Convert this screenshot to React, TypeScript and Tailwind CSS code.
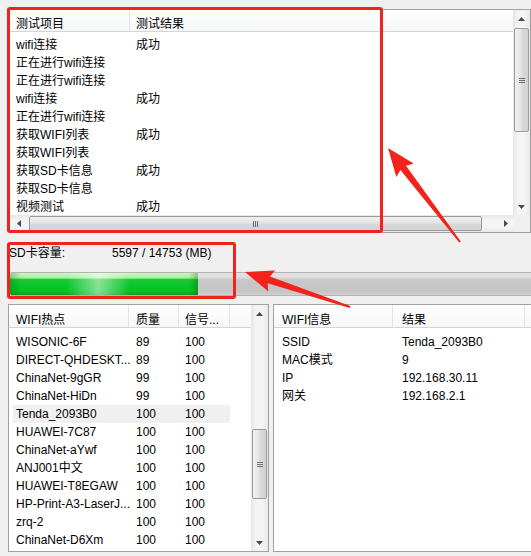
import React from 'react';

const topRows = [
  ['wifi连接', '成功'],
  ['正在进行wifi连接', ''],
  ['正在进行wifi连接', ''],
  ['wifi连接', '成功'],
  ['正在进行wifi连接', ''],
  ['获取WIFI列表', '成功'],
  ['获取WIFI列表', ''],
  ['获取SD卡信息', '成功'],
  ['获取SD卡信息', ''],
  ['视频测试', '成功'],
];

const wifiRows = [
  ['WISONIC-6F', '89', '100'],
  ['DIRECT-QHDESKT...', '89', '100'],
  ['ChinaNet-9gGR', '99', '100'],
  ['ChinaNet-HiDn', '99', '100'],
  ['Tenda_2093B0', '100', '100'],
  ['HUAWEI-7C87', '100', '100'],
  ['ChinaNet-aYwf', '100', '100'],
  ['ANJ001中文', '100', '100'],
  ['HUAWEI-T8EGAW', '100', '100'],
  ['HP-Print-A3-LaserJ...', '100', '100'],
  ['zrq-2', '100', '100'],
  ['ChinaNet-D6Xm', '100', '100'],
];

const infoRows = [
  ['SSID', 'Tenda_2093B0'],
  ['MAC模式', '9'],
  ['IP', '192.168.30.11'],
  ['网关', '192.168.2.1'],
];

function Tri({ dir }: { dir: 'up' | 'down' | 'left' | 'right' }) {
  const pts = {
    up: '0,4 3.5,0 7,4',
    down: '0,0 7,0 3.5,4',
    left: '4,0 4,7 0,3.5',
    right: '0,0 0,7 4,3.5',
  }[dir];
  const vertical = dir === 'up' || dir === 'down';
  return (
    <svg width={vertical ? 7 : 4} height={vertical ? 4 : 7} viewBox={vertical ? '0 0 7 4' : '0 0 4 7'}>
      <polygon points={pts} fill="#4a4a4a" />
    </svg>
  );
}

function VThumb({ h }: { h: string }) {
  return (
    <div className={`${h} mx-[1px] rounded-[2px] border border-[#9b9b9b] bg-[linear-gradient(90deg,#f2f2f2,#e4e4e4_45%,#d9d9d9_55%,#d2d2d2)] flex flex-col items-center justify-center gap-[1px]`}>
      <div className="w-[6px] h-[1px] bg-[#6e6e6e]" />
      <div className="w-[6px] h-[1px] bg-[#6e6e6e]" />
      <div className="w-[6px] h-[1px] bg-[#6e6e6e]" />
    </div>
  );
}

function VScroll({ gap, thumb }: { gap: string; thumb: string }) {
  return (
    <div className="w-[17px] h-full shrink-0 flex flex-col bg-[linear-gradient(90deg,#e6e6e6,#f4f4f4_30%,#f4f4f4_70%,#e9e9e9)]">
      <div className="h-[17px] flex items-center justify-center"><Tri dir="up" /></div>
      <div className={gap} />
      <VThumb h={thumb} />
      <div className="flex-1" />
      <div className="h-[17px] flex items-center justify-center"><Tri dir="down" /></div>
    </div>
  );
}

function HeaderCell({ w, pl, pt = 'pt-[6px]', line = true, children }: { w: string; pl: string; pt?: string; line?: boolean; children?: React.ReactNode }) {
  return (
    <div className={`${w} ${pl} ${pt} h-full flex items-center shrink-0 ${line ? 'border-r border-[#e2e4e7]' : ''}`}>{children}</div>
  );
}

function TopList() {
  return (
    <div className="w-[522px] h-[224px] border border-[#a0a0a0] bg-white flex flex-col">
      <div className="flex h-[205px]">
        <div className="flex-1">
          <div className="h-[22px] flex bg-[linear-gradient(180deg,#ffffff,#f6f7f8)] border-b border-[#d5d5d5]">
            <HeaderCell w="w-[120px]" pl="pl-[6px]">测试项目</HeaderCell>
            <HeaderCell w="w-[200px]" pl="pl-[6px]" line={false}>测试结果</HeaderCell>
          </div>
          <div className="pt-[4px]">
            {topRows.map((r, i) => (
              <div key={i} className="h-[18px] flex items-center">
                <div className="w-[120px] pl-[6px] whitespace-nowrap">{r[0]}</div>
                <div className="pl-[6px]">{r[1]}</div>
              </div>
            ))}
          </div>
        </div>
        <VScroll gap="h-[1px]" thumb="h-[104px]" />
      </div>
      <div className="flex h-[17px]">
        <div className="w-[504px] h-full flex items-center bg-[linear-gradient(180deg,#e6e6e6,#f4f4f4_30%,#f4f4f4_70%,#e9e9e9)]">
          <div className="w-[17px] h-full flex items-center justify-center"><Tri dir="left" /></div>
          <div className="w-[2px]" />
          <div className="w-[453px] h-[15px] rounded-[2px] border border-[#9b9b9b] bg-[linear-gradient(180deg,#f2f2f2,#e4e4e4_45%,#d9d9d9_55%,#d2d2d2)] flex items-center justify-center gap-[1px]">
            <div className="w-[1px] h-[6px] bg-[#6e6e6e]" />
            <div className="w-[1px] h-[6px] bg-[#6e6e6e]" />
            <div className="w-[1px] h-[6px] bg-[#6e6e6e]" />
          </div>
          <div className="flex-1" />
          <div className="w-[17px] h-full flex items-center justify-center"><Tri dir="right" /></div>
        </div>
        <div className="flex-1 bg-[#f0f0f0]" />
      </div>
    </div>
  );
}

function WifiList() {
  return (
    <div className="w-[261px] h-full shrink-0 border border-[#a0a0a0] bg-white flex">
      <div className="flex-1 overflow-hidden">
        <div className="h-[23px] flex bg-[linear-gradient(180deg,#ffffff,#f6f7f8)] border-b border-[#d5d5d5]">
          <HeaderCell w="w-[120px]" pl="pl-[7px]" pt="pt-[7px]">WIFI热点</HeaderCell>
          <HeaderCell w="w-[50px]" pl="pl-[7px]" pt="pt-[7px]">质量</HeaderCell>
          <HeaderCell w="w-[51px]" pl="pl-[6px]" pt="pt-[7px]">信号...</HeaderCell>
        </div>
        <div className="pt-[5px]">
          {wifiRows.map((r, i) => (
            <div key={i} className={`ml-[4px] w-[217px] h-[18px] flex items-center ${i === 4 ? 'bg-[#f0f0f0]' : ''}`}>
              <div className="w-[116px] pl-[3px] whitespace-nowrap">{r[0]}</div>
              <div className="w-[50px] pl-[7px]">{r[1]}</div>
              <div className="w-[51px] pl-[6px]">{r[2]}</div>
            </div>
          ))}
        </div>
      </div>
      <VScroll gap="h-[107px]" thumb="h-[70px]" />
    </div>
  );
}

function InfoList() {
  return (
    <div className="w-[270px] h-full border border-[#a0a0a0] bg-white shrink-0">
      <div className="h-[23px] flex bg-[linear-gradient(180deg,#ffffff,#f6f7f8)] border-b border-[#d5d5d5]">
        <HeaderCell w="w-[119px]" pl="pl-[8px]" pt="pt-[7px]">WIFI信息</HeaderCell>
        <HeaderCell w="w-[132px]" pl="pl-[9px]" pt="pt-[7px]">结果</HeaderCell>
      </div>
      <div className="pt-[5px]">
        {infoRows.map((r, i) => (
          <div key={i} className="h-[18px] flex items-center">
            <div className="w-[119px] pl-[8px]">{r[0]}</div>
            <div className="pl-[9px]">{r[1]}</div>
          </div>
        ))}
      </div>
    </div>
  );
}

export default function App() {
  return (
    <div className="relative w-[531px] h-[556px] overflow-hidden bg-[#f0f0f0] text-[12px] text-black font-['Liberation_Sans','Noto_Sans_CJK_SC',sans-serif]">
      <div className="pt-[9px] pl-[9px]">
        <TopList />
      </div>

      <div className="mt-[11px] h-[18px] flex items-center pl-[9px]">
        <span className="w-[103px]">SD卡容量:</span>
        <span>5597 / 14753 (MB)</span>
      </div>

      <div className="mt-[10px] ml-[9px] w-[530px] h-[24px] rounded-[3px] border border-[#b4b4b4] bg-[linear-gradient(180deg,#e4e4e4_0%,#dcdcdc_22%,#c8c8c8_30%,#c5c5c5_85%,#d2d2d2_100%)] overflow-hidden">
        <div className="relative w-[188px] h-full bg-[linear-gradient(180deg,#c8f9c2_0%,#a7f1a0_22%,#16c832_30%,#00c424_80%,#0aa51f_100%)]">
          <div className="absolute inset-0 bg-[linear-gradient(90deg,rgba(0,80,0,0.25)_0%,rgba(255,255,255,0)_6%,rgba(255,255,255,0)_30%,rgba(255,255,255,0.5)_47%,rgba(255,255,255,0)_64%,rgba(255,255,255,0)_95%,rgba(0,80,0,0.3)_100%)]" />
        </div>
      </div>

      <div className="mt-[8px] ml-[8px] h-[248px] flex gap-[4px]">
        <WifiList />
        <InfoList />
      </div>

      {/* annotations */}
      <div className="absolute left-[7px] top-[7px] w-[376px] h-[226px] border-[3px] border-[#f2231b] rounded-[3px]" />
      <div className="absolute left-[7px] top-[242px] w-[229px] h-[57px] border-[3px] border-[#f2231b] rounded-[3px]" />
      <svg className="absolute left-0 top-0" width="531" height="556" viewBox="0 0 531 556">
        <polygon
          points="388,148 396.3,176.9 400.4,169.9 459.2,242.6 460.8,241.4 406,165.7 413.7,163.5"
          fill="#f2231b"
        />
        <polygon
          points="245,272 268.1,291.3 267.7,283.2 349.7,307.9 350.3,306.1 269.9,276.6 275.1,270.5"
          fill="#f2231b"
        />
      </svg>
    </div>
  );
}
